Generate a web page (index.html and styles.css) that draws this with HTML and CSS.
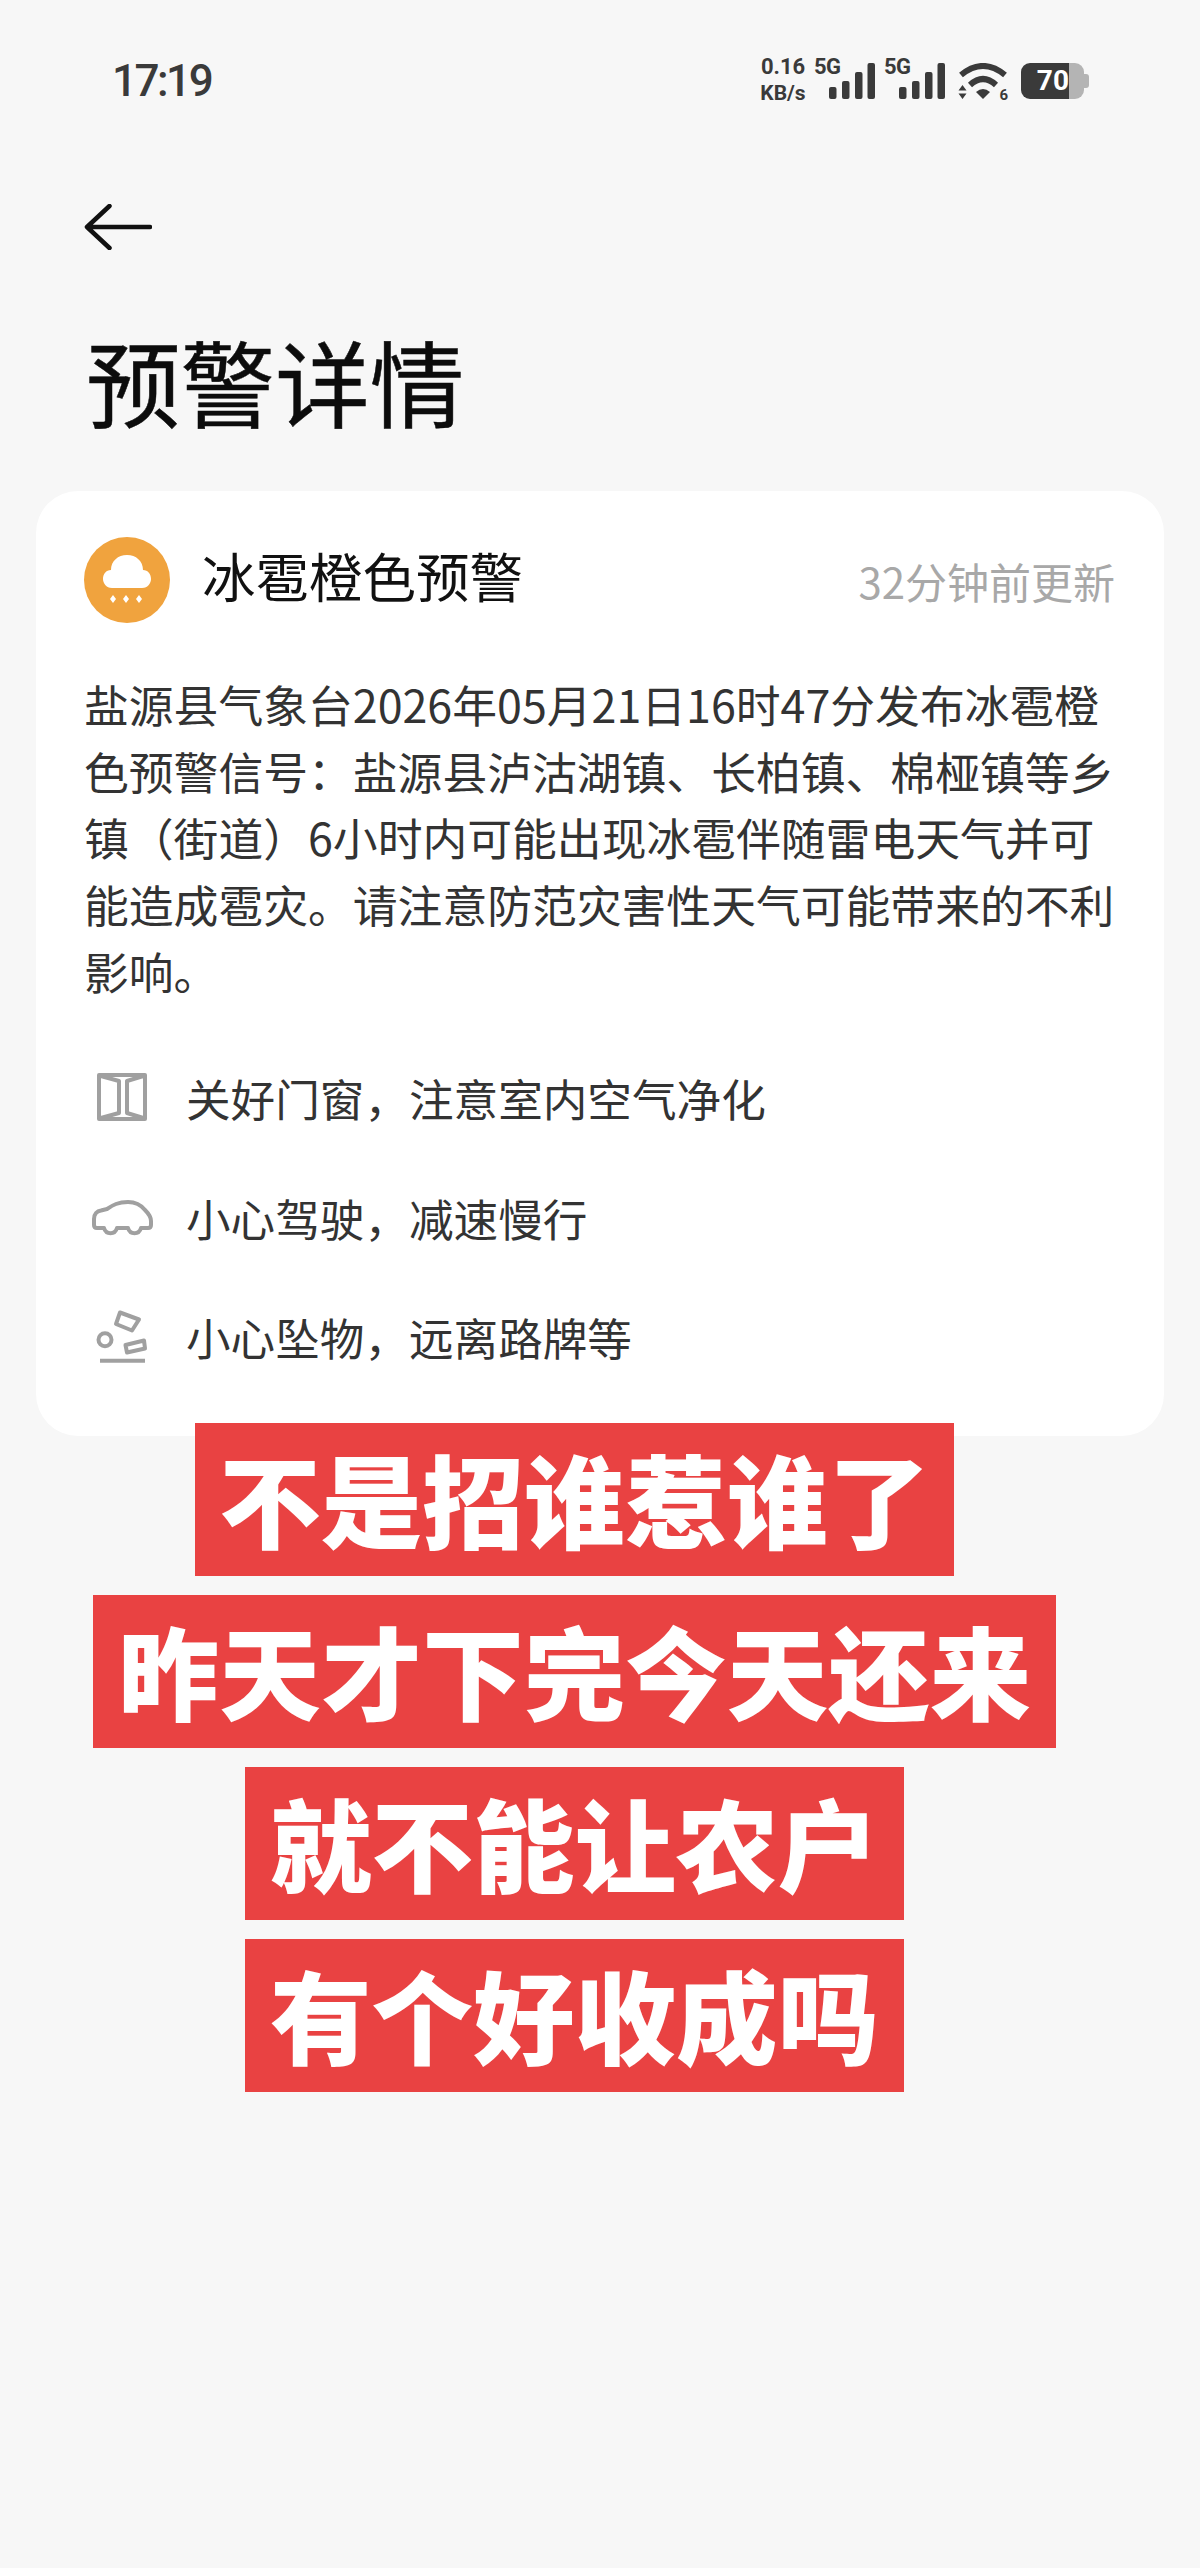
FILE: index.html
```html
<!DOCTYPE html>
<html lang="zh-CN">
<head>
<meta charset="utf-8">
<title>预警详情</title>
<link rel="stylesheet" href="styles.css">
</head>
<body>
<div class="page">
  <header class="status">
    <span class="time">17:19</span>
    <div class="status-icons">
      <span class="speed"><span>0.16</span><span class="unit">KB/s</span></span>
      <span class="net"><span class="g">5G</span>
        <svg class="bars" width="46" height="36" viewBox="0 0 46 36"><rect x="0" y="24" width="7.500" height="12" rx="2"/><rect x="13" y="18" width="7.500" height="18" rx="2"/><rect x="26" y="9" width="7.500" height="27" rx="2"/><rect x="38.500" y="0" width="7.500" height="36" rx="2"/></svg>
      </span>
      <span class="net net-two"><span class="g">5G</span>
        <svg class="bars" width="46" height="36" viewBox="0 0 46 36"><rect x="0" y="24" width="7.500" height="12" rx="2"/><rect x="13" y="18" width="7.500" height="18" rx="2"/><rect x="26" y="9" width="7.500" height="27" rx="2"/><rect x="38.500" y="0" width="7.500" height="36" rx="2"/></svg>
      </span>
      <span class="wifi">
        <svg width="50" height="38" viewBox="0 0 50 38"><path d="M3 12Q25 -6 47 12" class="arc"/><path d="M12 22Q25 10 38 22" class="arc"/><path d="M18 29Q25 23 32 29L25 36Z" class="fill"/><path d="M0.500 27.500L4.500 22L8.500 27.500ZM0.500 30.500L4.500 36L8.500 30.500Z" class="fill"/></svg>
        <span class="six">6</span>
      </span>
      <span class="battery"><span class="level">70</span><span class="rest"></span><span class="tip"></span></span>
    </div>
  </header>

  <nav class="nav">
    <svg width="68" height="46" viewBox="0 0 68 46" class="back"><path d="M66 23H3M25.500 2L3 23L25.500 44"/></svg>
  </nav>

  <h1 class="title">预警详情</h1>

  <section class="card">
    <div class="card-head">
      <span class="badge">
        <svg width="86" height="86" viewBox="0 0 86 86"><path d="M28 51C22 51 19 46 19 42C19 37 22 33 27 33C27 24 34 18 43 18C52 18 59 24 59 33C64 33 67 37 67 42C67 46 64 51 58 51Z" fill="#fff"/><path d="M29 58l3 4-3 4-3-4ZM42 58l3 4-3 4-3-4ZM55 58l3 4-3 4-3-4Z" fill="#fff"/></svg>
      </span>
      <h2 class="alert-name">冰雹橙色预警</h2>
      <span class="updated">32分钟前更新</span>
    </div>
    <p class="desc">盐源县气象台2026年05月21日16时47分发布冰雹橙色预警信号：盐源县泸沽湖镇、长柏镇、棉桠镇等乡镇（街道）6小时内可能出现冰雹伴随雷电天气并可能造成雹灾。请注意防范灾害性天气可能带来的不利影响。</p>
    <ul class="tips">
      <li class="tip-row">
        <svg class="tip-icon" width="64" height="64" viewBox="0 0 64 64"><path d="M10 9H56V53H10ZM10 9.500L30 15V47L10 52.500M56 9.500L38 15V47L56 52.500"/></svg>
        <span>关好门窗，注意室内空气净化</span>
      </li>
      <li class="tip-row">
        <svg class="tip-icon" width="64" height="64" viewBox="0 0 64 64"><path d="M8 43C6 43 5 42 5 40V34C5 29 8 26 12 25.500L18 24C24 20 29 17 39 17C47 17 52 20 56 25C59 28 62 32 62 36V40C62 42 61 43 59 43H52C50 50 41 50 39 43H28C26 50 17 50 15 43Z"/></svg>
        <span>小心驾驶，减速慢行</span>
      </li>
      <li class="tip-row">
        <svg class="tip-icon" width="64" height="64" viewBox="0 0 64 64"><path d="M31 7.500L50 14.500L43 25.500L27 19Z"/><circle cx="16" cy="34.700" r="6.500"/><path d="M36.500 40L55 35.500L56 43.500L38 47.500Z"/><path d="M11 55.700H56"/></svg>
        <span>小心坠物，远离路牌等</span>
      </li>
    </ul>
  </section>

  <div class="banners">
    <div class="banner">不是招谁惹谁了</div>
    <div class="banner">昨天才下完今天还来</div>
    <div class="banner">就不能让农户</div>
    <div class="banner">有个好收成吗</div>
  </div>
</div>
</body>
</html>
```

FILE: styles.css
```css
* { box-sizing: border-box; }
html, body { margin: 0; padding: 0; }
body {
  width: 1200px;
  height: 2568px;
  overflow: hidden;
  background: #f7f7f7;
  font-family: "Noto Sans CJK SC", "Noto Sans", sans-serif;
  color: #111;
}
.page { display: flex; flex-direction: column; height: 2568px; }

.status {
  height: 162px;
  padding: 54px 111px 0 112px;
  display: flex;
  justify-content: space-between;
  align-items: flex-start;
}
.time {
  font-family: Roboto, "Noto Sans", sans-serif;
  font-size: 44px;
  font-weight: 500;
  letter-spacing: -2.500px;
  line-height: 54px;
  color: #3a3a3a;
}
.status-icons { display: flex; align-items: flex-start; color: #3a3a3a; }
.speed {
  display: flex;
  flex-direction: column;
  align-items: center;
  width: 48px;
  font-family: Roboto, sans-serif;
  font-size: 22px;
  font-weight: 700;
  line-height: 26px;
}
.unit { font-size: 21px; }
.net { position: relative; width: 46px; height: 45px; margin-left: 22px; }
.net-two { margin-left: 24px; }
.net .g {
  position: absolute;
  left: -15px;
  top: 0;
  font-family: Roboto, sans-serif;
  font-size: 22px;
  font-weight: 700;
  line-height: 26px;
  letter-spacing: -0.500px;
}
.bars { position: absolute; left: 0; top: 9px; fill: #3a3a3a; }
.wifi { position: relative; width: 50px; height: 38px; margin-left: 13px; margin-top: 9px; }
.wifi svg { display: block; }
.arc { fill: none; stroke: #3a3a3a; stroke-width: 6px; }
.fill { fill: #3a3a3a; }
.six {
  position: absolute;
  right: 0;
  top: 25px;
  font-family: Roboto, sans-serif;
  font-size: 15px;
  font-weight: 700;
  line-height: 14px;
}
.battery { display: flex; align-items: center; height: 36px; margin-left: 13px; margin-top: 9px; }
.level {
  width: 48px;
  height: 36px;
  background: #3a3a3a;
  border-radius: 9px 0 0 9px;
  color: #fff;
  font-family: Roboto, sans-serif;
  font-size: 28px;
  font-weight: 700;
  line-height: 36px;
  text-align: right;
}
.rest { width: 15px; height: 36px; background: #b4b4b4; border-radius: 0 9px 9px 0; }
.tip { width: 5px; height: 14px; background: #b4b4b4; border-radius: 0 3px 3px 0; }

.nav { height: 60px; padding: 0 0 0 84px; margin-top: 42px; }
.back { display: block; fill: none; stroke: #111; stroke-width: 4.500px; stroke-linecap: round; stroke-linejoin: round; }

.title {
  margin: 56px 0 0 86px;
  font-size: 94.600px;
  font-weight: 400;
  line-height: 120px;
  color: #0c0c0c;
  -webkit-text-stroke: 0.5px #0c0c0c;
}

.card {
  margin: 51px 36px 0;
  height: 945px;
  padding: 46px 49px 0 48px;
  background: #fff;
  border-radius: 42px;
}
.card-head { display: flex; align-items: center; height: 86px; }
.badge {
  width: 86px;
  height: 86px;
  border-radius: 50%;
  background: #f0a33e;
  flex: none;
}
.badge svg { display: block; }
.alert-name {
  margin: 0 0 10px 32px;
  font-size: 53.500px;
  font-weight: 400;
  line-height: 70px;
  color: #111;
}
.updated { margin-left: auto; margin-top: 1px; font-size: 42px; color: #a8a8a8; line-height: 60px; }
.desc {
  margin: 48px 0 0;
  font-size: 44.800px;
  line-height: 66.700px;
  color: #333;
}
.tips { list-style: none; margin: 61px 0 0; padding: 0; display: flex; flex-direction: column; gap: 55.500px; }
.tip-row { display: flex; align-items: center; height: 64px; font-size: 44.600px; color: #333; }
.tip-icon { flex: none; margin-left: 5px; margin-right: 33px; fill: none; stroke: #a0a0a0; stroke-width: 4px; stroke-linejoin: round; }

.banners {
  position: relative;
  margin-top: -13px;
  padding-right: 51px;
  display: flex;
  flex-direction: column;
  align-items: center;
  gap: 19px;
}
.banner {
  height: 153px;
  padding: 0 24.700px;
  background: #e94242;
  color: #fff;
  font-size: 101.500px;
  font-weight: 900;
  line-height: 148px;
  white-space: nowrap;
}
```
